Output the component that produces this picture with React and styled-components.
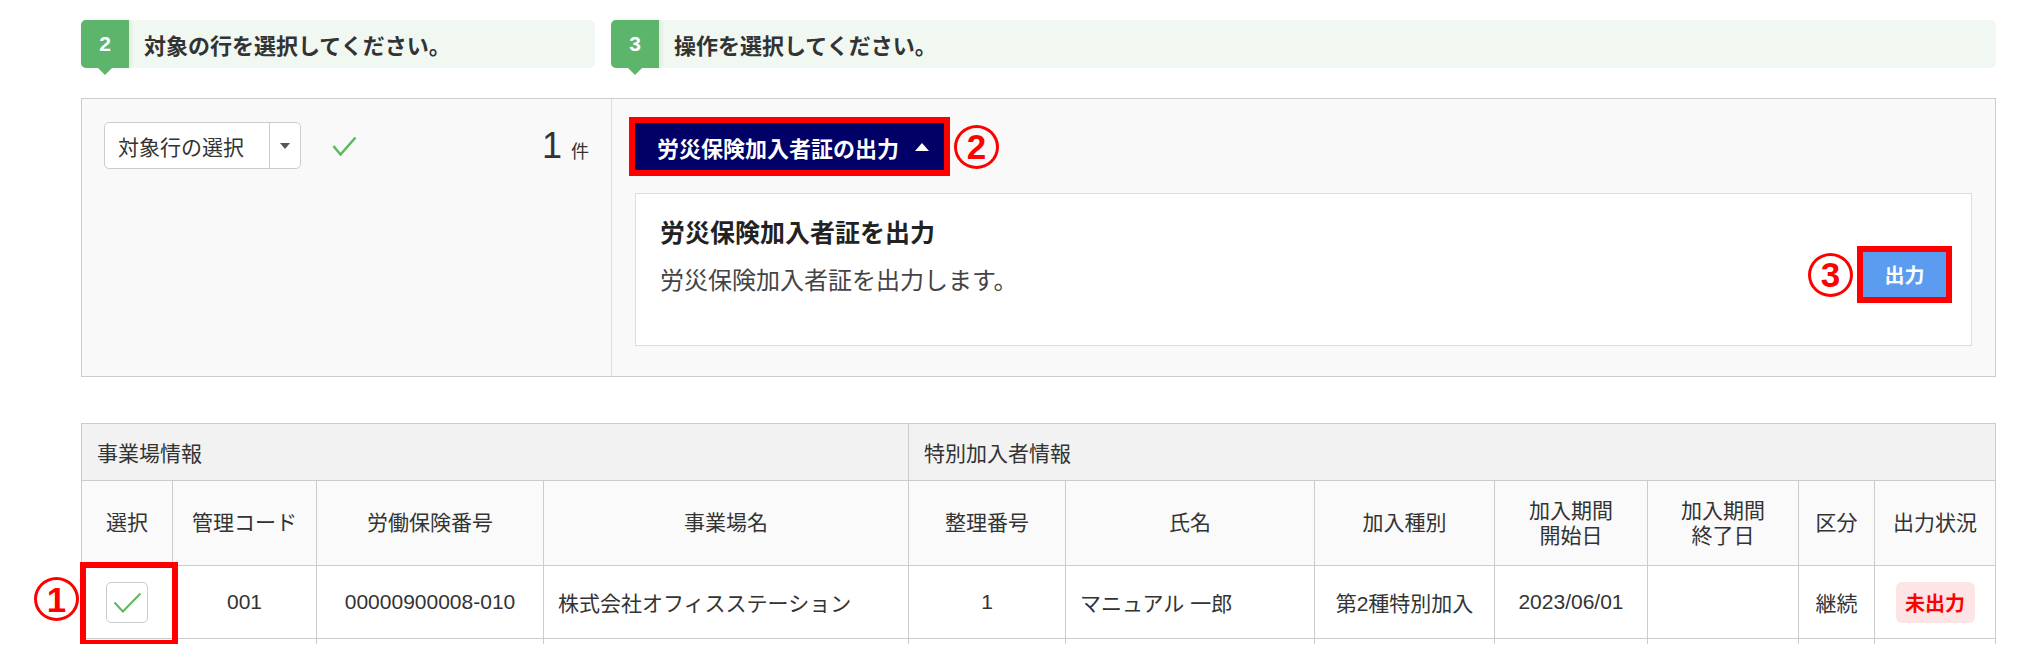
import React from 'react';
import styled, { createGlobalStyle } from 'styled-components';

const GlobalStyle = createGlobalStyle`
  * {
    box-sizing: border-box;
  }
  body {
    margin: 0;
    background: #fff;
    color: #333;
    font-family: "Liberation Sans", "Noto Sans CJK JP", sans-serif;
  }
`;

const Page = styled.div`
  width: 1996px;
  padding: 20px 0 0 81px;
`;

const Steps = styled.div`
  display: flex;
  gap: 16px;
`;

const Step = styled.div`
  flex: ${p => (p.$width ? `0 0 ${p.$width}px` : '1')};
  height: 48px;
  display: flex;
  align-items: center;
  background: #f1f8f2;
  border-radius: 5px;
`;

const StepBadge = styled.div`
  position: relative;
  width: 48px;
  height: 100%;
  display: flex;
  align-items: center;
  justify-content: center;
  background: #5db56b;
  color: #fff;
  font-size: 21px;
  font-weight: 700;
  border-radius: 5px 0 0 5px;
  box-shadow: 2px 0 5px rgba(0, 0, 0, 0.08);

  &::after {
    content: '';
    position: absolute;
    top: 100%;
    left: 50%;
    margin-left: -7px;
    border-left: 7px solid transparent;
    border-right: 7px solid transparent;
    border-top: 7px solid #5db56b;
  }
`;

const StepText = styled.div`
  margin-left: 15px;
  font-size: 22px;
  font-weight: 700;
  color: #333;
`;

const Panel = styled.div`
  margin-top: 30px;
  display: flex;
  border: 1px solid #ccc;
  background: #f9f9f9;
`;

const LeftCol = styled.div`
  flex: 0 0 530px;
  border-right: 1px solid #ddd;
  padding: 23px 22px;
  display: flex;
  align-items: flex-start;
`;

const SelectRow = styled.div`
  flex: 1;
  display: flex;
  align-items: center;
`;

const Select = styled.div`
  width: 197px;
  height: 47px;
  display: flex;
  background: #fff;
  border: 1px solid #ccc;
  border-radius: 5px;
`;

const SelectLabel = styled.div`
  flex: 1;
  display: flex;
  align-items: center;
  padding-left: 13px;
  font-size: 21px;
  color: #333;
`;

const SelectArrow = styled.div`
  width: 31px;
  border-left: 1px solid #ccc;
  display: flex;
  align-items: center;
  justify-content: center;

  &::before {
    content: '';
    border-left: 5px solid transparent;
    border-right: 5px solid transparent;
    border-top: 6px solid #555;
  }
`;

const CheckMark = styled.span`
  margin-left: 31px;
  display: block;
  line-height: 0;
`;

const Count = styled.div`
  margin-left: auto;
  display: flex;
  align-items: baseline;
  color: #333;
`;

const CountNum = styled.span`
  font-size: 36px;
`;

const CountUnit = styled.span`
  margin-left: 9px;
  font-size: 18px;
`;

const RightCol = styled.div`
  flex: 1;
  padding: 24px 23px 30px 23px;
`;

const ActionRow = styled.div`
  display: flex;
  align-items: center;
  gap: 10px;
`;

const MenuButton = styled.button`
  height: 47px;
  width: 309px;
  display: flex;
  align-items: center;
  gap: 16px;
  padding: 0 12px 0 22px;
  border: none;
  border-radius: 0;
  background: #000066;
  color: #fff;
  font-family: inherit;
  font-size: 22px;
  font-weight: 700;
  outline: ${p => (p.$marked ? '6px solid #f00' : 'none')};

  &::after {
    content: '';
    border-left: 7px solid transparent;
    border-right: 7px solid transparent;
    border-bottom: 8px solid #fff;
  }
`;

const Circled = styled.span`
  width: 45px;
  height: 44px;
  flex: 0 0 auto;
  display: inline-flex;
  align-items: center;
  justify-content: center;
  border: 3px solid #f00;
  border-radius: 50%;
  color: #f00;
  font-size: 35px;
  font-weight: 700;
  line-height: 1;
`;

const Card = styled.div`
  margin-top: 23px;
  height: 153px;
  display: flex;
  justify-content: space-between;
  align-items: center;
  padding: 0 25px 0 24px;
  background: #fff;
  border: 1px solid #ddd;
`;

const CardText = styled.div`
  align-self: flex-start;
  padding-top: 21px;
`;

const CardTitle = styled.div`
  font-size: 25px;
  font-weight: 700;
  line-height: 1.5;
  color: #222;
`;

const CardDesc = styled.div`
  margin-top: 10px;
  font-size: 24px;
  line-height: 1.5;
  color: #444;
`;

const OutputGroup = styled.div`
  margin-top: 10px;
  display: flex;
  align-items: center;
  gap: 10px;
`;

const OutputButton = styled.button`
  width: 83px;
  height: 45px;
  border: none;
  border-radius: 0;
  background: #5b9cf0;
  color: #fff;
  font-family: inherit;
  font-size: 20px;
  font-weight: 700;
  outline: ${p => (p.$marked ? '6px solid #f00' : 'none')};
`;

const Table = styled.table`
  margin-top: 46px;
  width: 1915px;
  border-collapse: collapse;
  table-layout: fixed;
  font-size: 21px;
  color: #333;
`;

const GroupCell = styled.th`
  height: 57px;
  padding: 0 15px;
  text-align: left;
  font-weight: 400;
  background: #f2f2f2;
  border: 1px solid #ccc;
`;

const HeadCell = styled.th`
  height: 85px;
  padding: 0 8px;
  text-align: center;
  font-weight: 400;
  line-height: 1.2;
  background: #fafafa;
  border: 1px solid #ccc;
`;

const Cell = styled.td`
  position: ${p => (p.$anchor ? 'relative' : 'static')};
  height: 73px;
  padding: 0 14px;
  text-align: ${p => p.$align || 'center'};
  background: #fff;
  border: 1px solid #ccc;
  white-space: nowrap;
`;

const CutCell = styled.td`
  height: 5px;
  padding: 0;
  border-left: 1px solid #ccc;
  border-right: 1px solid #ccc;
`;

const CheckBox = styled.span`
  width: 42px;
  height: 41px;
  margin: 0 auto;
  display: flex;
  align-items: center;
  justify-content: center;
  background: #fff;
  border: 1px solid #ccc;
  border-radius: 5px;
`;

const Highlight = styled.span`
  position: absolute;
  z-index: 2;
  top: -4px;
  left: -2px;
  width: 98px;
  height: 84px;
  border: 6px solid #f00;
  pointer-events: none;
`;

const SideMark = styled.span`
  position: absolute;
  top: 9px;
  right: calc(100% + 7px);
  display: flex;
`;

const StatusBadge = styled.span`
  display: inline-flex;
  align-items: center;
  justify-content: center;
  width: 79px;
  height: 41px;
  border-radius: 6px;
  background: #fde5e5;
  color: #f00;
  font-size: 20px;
  font-weight: 700;
`;

const columns = [91, 144, 227, 365, 157, 249, 180, 153, 151, 76, 121];

const headers = [
  ['選択'],
  ['管理コード'],
  ['労働保険番号'],
  ['事業場名'],
  ['整理番号'],
  ['氏名'],
  ['加入種別'],
  ['加入期間', '開始日'],
  ['加入期間', '終了日'],
  ['区分'],
  ['出力状況'],
];

const Check = ({ width, height, stroke = 2.5 }) => (
  <svg width={width} height={height} viewBox={`0 0 ${width} ${height}`}>
    <path
      d={`M1.5 ${height * 0.5} L${width * 0.34} ${height - 1.5} L${width - 1.5} 1.5`}
      fill="none"
      stroke="#5cb85c"
      strokeWidth={stroke}
    />
  </svg>
);

const App = () => {
  return (
    <Page>
      <GlobalStyle />
      <Steps>
        <Step $width={514}>
          <StepBadge>2</StepBadge>
          <StepText>対象の行を選択してください。</StepText>
        </Step>
        <Step>
          <StepBadge>3</StepBadge>
          <StepText>操作を選択してください。</StepText>
        </Step>
      </Steps>

      <Panel>
        <LeftCol>
          <SelectRow>
            <Select>
              <SelectLabel>対象行の選択</SelectLabel>
              <SelectArrow />
            </Select>
            <CheckMark>
              <Check width={25} height={20} stroke={2.5} />
            </CheckMark>
            <Count>
              <CountNum>1</CountNum>
              <CountUnit>件</CountUnit>
            </Count>
          </SelectRow>
        </LeftCol>
        <RightCol>
          <ActionRow>
            <MenuButton $marked>労災保険加入者証の出力</MenuButton>
            <Circled>2</Circled>
          </ActionRow>
          <Card>
            <CardText>
              <CardTitle>労災保険加入者証を出力</CardTitle>
              <CardDesc>労災保険加入者証を出力します。</CardDesc>
            </CardText>
            <OutputGroup>
              <Circled>3</Circled>
              <OutputButton $marked>出力</OutputButton>
            </OutputGroup>
          </Card>
        </RightCol>
      </Panel>

      <Table>
        <colgroup>
          {columns.map((w, i) => (
            <col key={i} style={{ width: w }} />
          ))}
        </colgroup>
        <thead>
          <tr>
            <GroupCell colSpan={4}>事業場情報</GroupCell>
            <GroupCell colSpan={7}>特別加入者情報</GroupCell>
          </tr>
          <tr>
            {headers.map((lines, i) => (
              <HeadCell key={i}>
                {lines.map((l, j) => (
                  <React.Fragment key={j}>
                    {j > 0 && <br />}
                    {l}
                  </React.Fragment>
                ))}
              </HeadCell>
            ))}
          </tr>
        </thead>
        <tbody>
          <tr>
            <Cell $anchor>
              <CheckBox>
                <Check width={29} height={21} stroke={2} />
              </CheckBox>
              <Highlight>
                <SideMark>
                  <Circled>1</Circled>
                </SideMark>
              </Highlight>
            </Cell>
            <Cell>001</Cell>
            <Cell>00000900008-010</Cell>
            <Cell $align="left">株式会社オフィスステーション</Cell>
            <Cell>1</Cell>
            <Cell $align="left">マニュアル 一郎</Cell>
            <Cell>第2種特別加入</Cell>
            <Cell>2023/06/01</Cell>
            <Cell />
            <Cell>継続</Cell>
            <Cell>
              <StatusBadge>未出力</StatusBadge>
            </Cell>
          </tr>
          <tr>
            {columns.map((w, i) => (
              <CutCell key={i} />
            ))}
          </tr>
        </tbody>
      </Table>
    </Page>
  );
};

export default App;
